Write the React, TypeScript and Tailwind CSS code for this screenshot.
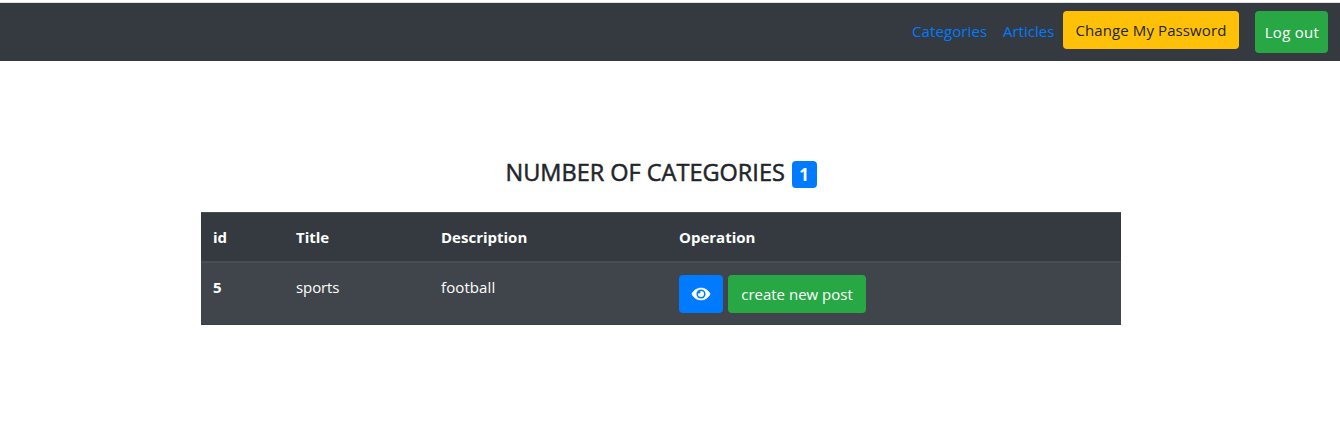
function EyeIcon() {
  return (
    <svg viewBox="0 0 576 512" className="h-4 w-[18px] overflow-visible">
      <path
        d="M572.52 241.4C518.29 135.59 410.93 64 288 64S57.68 135.64 3.48 241.41a32.35 32.35 0 0 0 0 29.19C57.71 376.41 165.07 448 288 448s230.32-71.64 284.52-177.41a32.35 32.35 0 0 0 0-29.19z"
        fill="white"
        stroke="white"
        strokeWidth="18"
      />
      <circle cx="288" cy="256" r="146" fill="#007bff" />
      <path
        d="M288 160a95.31 95.31 0 0 0-25.31 3.79 47.85 47.85 0 0 1-66.9 66.9A95.78 95.78 0 1 0 288 160z"
        fill="white"
      />
    </svg>
  );
}

export default function App() {
  return (
    <div className="min-h-[447px] bg-white pt-[2px] font-['Open_Sans',sans-serif] text-[15px] leading-6 text-[#212529]">
      <nav className="flex h-[59px] items-start justify-end border-t border-[#dedede] bg-[#343a40] pt-2 pr-3">
        <a href="#" className="mt-2 mr-4 w-[75px] whitespace-nowrap tracking-[0.1px] text-[#007bff]">Categories</a>
        <a href="#" className="mt-2 mr-2 w-[52px] whitespace-nowrap text-[#007bff]">Articles</a>
        <button className="mr-4 h-[38px] w-[176px] rounded-[4px] bg-[#ffc107] pb-px whitespace-nowrap tracking-[0.1px]">
          Change My Password
        </button>
        <button className="h-[42px] w-[73px] rounded-[4px] bg-[#28a745] pl-px whitespace-nowrap tracking-[0.3px] text-white">Log out</button>
      </nav>

      <main className="ml-[201px] w-[920px] pt-[97px]">
        <h4 className="flex h-[29px] items-center justify-center text-[23.5px] leading-[29px] font-medium">
          <span className="w-[280px] whitespace-nowrap [-webkit-text-stroke:0.5px_#212529]">NUMBER OF CATEGORIES</span>
          <span className="mt-[4px] ml-[6px] flex h-[27px] w-[25px] items-center justify-center rounded-[4px] bg-[#007bff] text-[17px] font-bold text-white">
            1
          </span>
        </h4>
        <table className="mt-[25px] w-full table-fixed border-separate border-spacing-0 bg-[#343a40] text-left text-white">
          <colgroup>
            <col className="w-[83px]" />
            <col className="w-[145px]" />
            <col className="w-[238px]" />
            <col />
          </colgroup>
          <thead>
            <tr className="h-[51px]">
              <th className="border-t border-b-2 border-[#454d55] px-3">id</th>
              <th className="border-t border-b-2 border-[#454d55] px-3">Title</th>
              <th className="border-t border-b-2 border-[#454d55] px-3">Description</th>
              <th className="border-t border-b-2 border-[#454d55] px-3">Operation</th>
            </tr>
          </thead>
          <tbody>
            <tr className="h-[62px] bg-[#40454b] align-top">
              <th className="border-b border-[#3b4148] px-3 pt-3">5</th>
              <td className="border-b border-[#3b4148] px-3 pt-3 tracking-[-0.1px]">sports</td>
              <td className="border-b border-[#3b4148] px-3 pt-3 tracking-[0.1px]">football</td>
              <td className="border-b border-[#3b4148] px-3 pt-3">
                <div className="flex gap-[5px]">
                  <button aria-label="View" className="flex h-[38px] w-[44px] items-center justify-center rounded-[4px] bg-[#007bff]">
                    <EyeIcon />
                  </button>
                  <button className="h-[38px] w-[138px] rounded-[4px] bg-[#28a745] whitespace-nowrap">create new post</button>
                </div>
              </td>
            </tr>
          </tbody>
        </table>
      </main>
    </div>
  );
}
